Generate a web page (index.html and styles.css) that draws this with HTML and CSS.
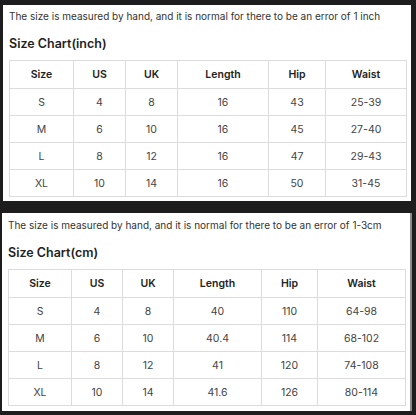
FILE: index.html
```html
<!DOCTYPE html>
<html>
<head>
<meta charset="utf-8">
<link rel="stylesheet" href="styles.css">
</head>
<body>
<section class="panel panel-inch">
  <p class="note">The size is measured by hand, and it is normal for there to be an error of 1 inch</p>
  <h2 class="title">Size Chart(inch)</h2>
  <table class="chart chart-inch">
    <colgroup><col class="c1"><col class="c2"><col class="c3"><col class="c4"><col class="c5"><col class="c6"></colgroup>
    <thead><tr><th>Size</th><th>US</th><th>UK</th><th>Length</th><th>Hip</th><th>Waist</th></tr></thead>
    <tbody>
      <tr><td>S</td><td>4</td><td>8</td><td>16</td><td>43</td><td>25-39</td></tr>
      <tr><td>M</td><td>6</td><td>10</td><td>16</td><td>45</td><td>27-40</td></tr>
      <tr><td>L</td><td>8</td><td>12</td><td>16</td><td>47</td><td>29-43</td></tr>
      <tr><td>XL</td><td>10</td><td>14</td><td>16</td><td>50</td><td>31-45</td></tr>
    </tbody>
  </table>
</section>
<section class="panel panel-cm">
  <p class="note">The size is measured by hand, and it is normal for there to be an error of 1-3cm</p>
  <h2 class="title">Size Chart(cm)</h2>
  <table class="chart chart-cm">
    <colgroup><col class="c1"><col class="c2"><col class="c3"><col class="c4"><col class="c5"><col class="c6"></colgroup>
    <thead><tr><th>Size</th><th>US</th><th>UK</th><th>Length</th><th>Hip</th><th>Waist</th></tr></thead>
    <tbody>
      <tr><td>S</td><td>4</td><td>8</td><td>40</td><td>110</td><td>64-98</td></tr>
      <tr><td>M</td><td>6</td><td>10</td><td>40.4</td><td>114</td><td>68-102</td></tr>
      <tr><td>L</td><td>8</td><td>12</td><td>41</td><td>120</td><td>74-108</td></tr>
      <tr><td>XL</td><td>10</td><td>14</td><td>41.6</td><td>126</td><td>80-114</td></tr>
    </tbody>
  </table>
</section>
</body>
</html>
```
FILE: styles.css
```css
html, body {
  margin: 0;
  padding: 0;
  background: #1d1d1d;
  font-family: Inter, "Noto Sans", sans-serif;
  color: #333;
}
body {
  width: 416px;
  height: 415px;
  overflow: hidden;
}
.panel {
  background: #fff;
  box-sizing: border-box;
}
.panel-inch {
  margin: 5px 5px 0 3px;
  height: 196px;
  padding: 4px 5px 0 6px;
}
.panel-cm {
  margin: 12px 4px 0 2px;
  height: 198px;
  padding: 5px 6px 0 6px;
  border-right: 2px solid #8a8a8a;
}
.note {
  margin: 0;
  font-size: 10px;
  line-height: 14px;
  color: #333;
}
.title {
  margin: 13px 0 8px;
  font-size: 12.5px;
  line-height: 16px;
  font-weight: 600;
  color: #1f1f1f;
}
.chart {
  border-collapse: collapse;
  table-layout: fixed;
  width: 397px;
  font-size: 10.5px;
}
.chart th, .chart td {
  border: 1.5px solid #dcdcdc;
  text-align: center;
  padding: 0;
  height: 26px;
  color: #444;
  font-weight: 400;
}
.chart th {
  height: 27px;
  font-weight: 600;
  color: #222;
}
.chart-inch .c1 { width: 64px; }
.chart-inch .c2 { width: 52px; }
.chart-inch .c3 { width: 52px; }
.chart-inch .c4 { width: 91px; }
.chart-inch .c5 { width: 57px; }
.chart-inch .c6 { width: 81px; }
.chart-cm .c1 { width: 63px; }
.chart-cm .c2 { width: 51px; }
.chart-cm .c3 { width: 51px; }
.chart-cm .c4 { width: 88px; }
.chart-cm .c5 { width: 56px; }
.chart-cm .c6 { width: 88px; }
```
